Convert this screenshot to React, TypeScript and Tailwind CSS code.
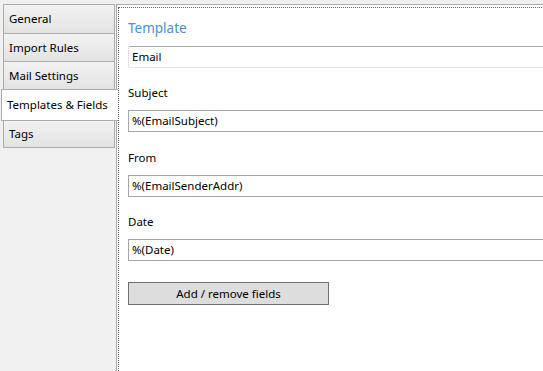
import React from "react";

const font = { fontFamily: '"Segoe UI", "Noto Sans", "Open Sans", sans-serif' };

function Tab({ label, h }: { label: string; h: string }) {
  return (
    <div
      className={`${h} -mt-px flex items-center pl-[5px] border border-[#acacac] bg-gradient-to-b from-[#f2f2f2] to-[#e3e3e3] text-[11.5px] text-black`}
    >
      {label}
    </div>
  );
}

function Field({ label, value, mt }: { label: string; value: string; mt: string }) {
  return (
    <div className="flex flex-col">
      <div className={`h-[16px] leading-[16px] text-[11.5px] text-black ${mt}`}>{label}</div>
      <div className="mt-[9px] h-[22px] w-[440px] border border-[#a7a7a7] bg-white pl-[3px] flex items-center text-[11.5px] text-black">
        {value}
      </div>
    </div>
  );
}

export default function App() {
  return (
    <div className="w-[543px] h-[371px] bg-[#f0f0f0] flex pt-[4px] overflow-hidden" style={font}>
      <div className="w-[116px] shrink-0 flex flex-col pl-[3px] pr-px pt-px">
        <Tab label="General" h="h-[30px]" />
        <Tab label="Import Rules" h="h-[29px]" />
        <Tab label="Mail Settings" h="h-[29px]" />
        <div className="h-[32px] -mt-px -ml-[2px] -mr-[3px] relative z-10 flex items-center pl-[5px] border border-[#acacac] border-r-0 bg-white text-[11.5px] text-black">
          Templates &amp; Fields
        </div>
        <Tab label="Tags" h="h-[28px]" />
      </div>
      <div className="flex-1 bg-white border-l border-t border-[#a9a9a9] pl-px pt-[2px]">
        <div className="h-[400px] w-[500px] border-l border-t border-dotted border-[#6b6b6b] pl-[9px] pt-[11px]">
          <div className="text-[13.5px] leading-[18px] text-[#4a8fd6]">Template</div>
          <div className="mt-[9px] h-[22px] w-[440px] border border-[#e2e2e2] border-t-[#acacac] rounded-l-[2px] bg-white pl-[3px] flex items-center text-[11.5px] text-black">
            Email
          </div>
          <Field label="Subject" value="%(EmailSubject)" mt="mt-[17px]" />
          <Field label="From" value="%(EmailSenderAddr)" mt="mt-[18px]" />
          <Field label="Date" value="%(Date)" mt="mt-[17px]" />
          <button className="mt-[21px] h-[23px] w-[201px] border border-[#707070] bg-[#dddddd] text-[11.5px] text-black flex items-center justify-center">
            Add / remove fields
          </button>
        </div>
      </div>
    </div>
  );
}
